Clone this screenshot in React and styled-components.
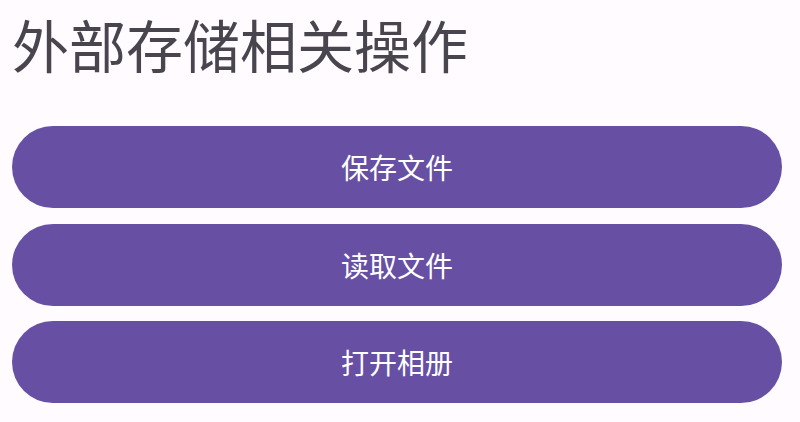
import styled, { createGlobalStyle } from "styled-components";

const GlobalStyle = createGlobalStyle`
	html, body {
		margin: 0;
		padding: 0;
		background: #fffbfe;
	}
	body {
		font-family: "Noto Sans CJK SC", "Noto Sans", sans-serif;
	}
`;

const actions = ["保存文件", "读取文件", "打开相册"];

export default function App() {
	return (
		<>
			<GlobalStyle />
			<Page>
				<Title>外部存储相关操作</Title>
				<ButtonList>
					{actions.map((label) => (
						<ActionBtn key={label}>{label}</ActionBtn>
					))}
				</ButtonList>
			</Page>
		</>
	);
}

const Page = styled.div`
	width: 800px;
	height: 422px;
	box-sizing: border-box;
	padding: 10px 18px 0 12px;
	display: flex;
	flex-direction: column;
`;

const Title = styled.h1`
	margin: 0 0 49px 0;
	font-size: 57px;
	font-weight: 400;
	line-height: 67px;
	color: #49454f;
`;

const ButtonList = styled.div`
	display: flex;
	flex-direction: column;
	gap: 15.5px;
`;

const ActionBtn = styled.button`
	height: 82px;
	width: 100%;
	border: none;
	border-radius: 41px;
	background-color: #6750a4;
	color: #ffffff;
	font-family: "Noto Sans CJK SC", "Noto Sans", sans-serif;
	font-size: 28px;
	padding: 0;
	cursor: pointer;
`;
